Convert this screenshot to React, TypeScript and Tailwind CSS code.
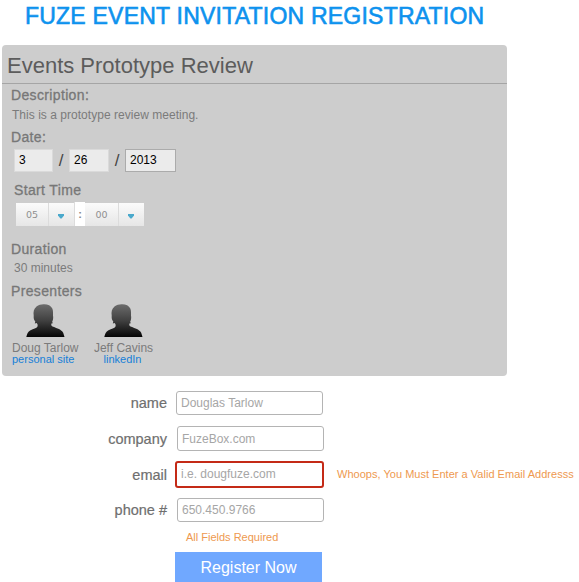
import React from "react";

function Avatar({ id }: { id: string }) {
  return (
    <svg className="block h-[33px] w-[39px]" viewBox="0 0 39 33">
      <defs>
        <linearGradient id={id} x1="0" y1="0" x2="0" y2="1">
          <stop offset="0" stopColor="#6c6c6c" />
          <stop offset="0.5" stopColor="#404040" />
          <stop offset="1" stopColor="#050505" />
        </linearGradient>
      </defs>
      <path
        fill={`url(#${id})`}
        d="M17.500 0.200C21.500 0 25 1.500 26.300 4.500C27.300 7 27 9.500 27 11.500C27.500 14 27 16 26.200 17.800L26.800 19.300L25.400 19.400C25 20.800 25.300 22 27.300 22.800C31 24.400 35.500 25.500 37.200 28.800L38.500 33H0.300C1 30.200 1.800 27.600 4.500 26.200C7.500 24.800 10.500 24.200 11.500 22.400C12 21.200 11.500 20 10.600 19L8.800 19.400L9.300 17.600C7.800 16 7.500 14 7.700 11.500C7.200 8 7.700 4.800 10.500 2.500C12.500 .9 15 .3 17.500 .2Z"
      />
    </svg>
  );
}

function SelectPart({ value, wide }: { value: string; wide?: boolean }) {
  return (
    <div className="flex h-[23px] bg-linear-to-b from-[#fbfbfb] to-[#e6e6e6]">
      <span
        className={`${wide ? "w-[33px]" : "w-[32px]"} text-center font-['DejaVu_Sans',sans-serif] text-[9.500px] leading-[24px] text-[#8f8f8f]`}
      >
        {value}
      </span>
      <span className="flex w-[26px] items-center justify-center border-l border-[#dcdcdc] pt-[3px] pr-[2px]">
        <svg className="h-[5px] w-[6px]" viewBox="0 0 6 5">
          <path d="M0 0H6V1.500L3.600 4.500H2.400L0 1.500Z" fill="#4aa9cc" />
        </svg>
      </span>
    </div>
  );
}

const label =
  "text-[14px] leading-[16px] tracking-[0.35px] text-[#777777] [-webkit-text-stroke:0.3px_#777777]";
const dateBox = "h-[23px] border bg-[#ebebeb] pl-[4px] text-[12px] leading-[21px] text-black";
const slash = "w-[16px] text-center text-[17px] text-[#444]";
const formLabel =
  "w-[167px] text-right text-[14.500px] leading-[24px] text-[#6f6f6f] [-webkit-text-stroke:0.2px_#6f6f6f]";
const field =
  "rounded-[3px] border border-[#b4b4b4] bg-white px-[4px] text-[12px] leading-[22px] text-[#a6a6a6]";

export default function App() {
  return (
    <main className="h-[582px] w-[579px] overflow-hidden bg-white font-['Liberation_Sans',Arial,sans-serif] whitespace-nowrap">
      <h1 className="h-[45px] pl-[25px] text-[23px] leading-[32px] tracking-[0.22px] text-[#0d92ee] [-webkit-text-stroke:0.6px_#0d92ee]">
        FUZE EVENT INVITATION REGISTRATION
      </h1>

      <section className="ml-[2px] h-[331px] w-[505px] rounded-[4px] bg-[#cdcdcd]">
        <h2 className="h-[39px] border-b border-[#a5a5a5] pl-[5px] text-[22px] leading-[42px] text-[#5c5c5c]">
          Events Prototype Review
        </h2>
        <div className="flex flex-col items-start pl-[9px]">
          <div className={`${label} mt-[3px]`}>Description:</div>
          <p className="mt-[4px] pl-[1px] text-[12px] leading-[16px] tracking-[0.03px] text-[#7b7b7b]">
            This is a prototype review meeting.
          </p>
          <div className={`${label} mt-[6px]`}>Date:</div>
          <div className="mt-[4px] flex pl-[3px] leading-[23px]">
            <div className={`${dateBox} w-[39px] border-[#dadada]`}>3</div>
            <span className={slash}>/</span>
            <div className={`${dateBox} w-[40px] border-[#dadada]`}>26</div>
            <span className={slash}>/</span>
            <div className={`${dateBox} w-[51px] border-[#ababab]`}>2013</div>
          </div>
          <div className={`${label} mt-[10px] pl-[3px]`}>Start Time</div>
          <div className="mt-[5px] flex items-end pl-[5px]">
            <SelectPart value="05" />
            <span className="-mt-px h-[24px] w-[11px] border-l border-[#dcdcdc] bg-white text-center text-[11px] leading-[24px] font-bold text-[#888]">
              :
            </span>
            <SelectPart value="00" wide />
          </div>
          <div className={`${label} mt-[15px]`}>Duration</div>
          <p className="mt-[3px] pl-[3px] text-[12px] leading-[16px] text-[#7b7b7b]">30 minutes</p>
          <div className={`${label} mt-[7px]`}>Presenters</div>
          <div className="mt-[5px] flex pl-[1px] text-[12px] leading-[12px] text-[#7b7b7b]">
            <div className="flex w-[67px] flex-col items-start">
              <div className="pl-[14px]">
                <Avatar id="doug" />
              </div>
              <span className="mt-[5px]">Doug Tarlow</span>
              <a className="text-[11px] leading-[11px] text-[#1680d8]">personal site</a>
            </div>
            <div className="ml-[15px] flex w-[59px] flex-col items-center">
              <Avatar id="jeff" />
              <span className="mt-[5px]">Jeff Cavins</span>
              <a className="pr-[2px] text-[11px] leading-[11px] text-[#1680d8]">linkedIn</a>
            </div>
          </div>
        </div>
      </section>

      <form>
        <div className="mt-[15px] flex h-[35px]">
          <label className={formLabel}>name</label>
          <div className={`${field} ml-[9px] h-[24px] w-[147px]`}>Douglas Tarlow</div>
        </div>
        <div className="flex h-[35px]">
          <label className={`${formLabel} pt-px`}>company</label>
          <div className={`${field} ml-[10px] h-[25px] w-[147px] pt-px`}>FuzeBox.com</div>
        </div>
        <div className="flex h-[37px]">
          <label className={`${formLabel} pt-[2px]`}>email</label>
          <div className="ml-[8px] h-[27px] w-[149px] rounded-[3px] border-2 border-[#c42a17] bg-white px-[4px] text-[12px] leading-[22px] text-[#a6a6a6]">
            i.e. dougfuze.com
          </div>
          <span className="ml-[13px] text-[11px] leading-[27px] tracking-[0.02px] text-[#ee994f]">
            Whoops, You Must Enter a Valid Email Addresss
          </span>
        </div>
        <div className="flex h-[32px]">
          <label className={formLabel}>phone #</label>
          <div className={`${field} ml-[10px] h-[24px] w-[147px]`}>650.450.9766</div>
        </div>
        <p className="h-[22px] pl-[186px] text-[11px] leading-[15px] text-[#ee994f]">All Fields Required</p>
        <button
          type="button"
          className="ml-[175px] block h-[30px] w-[147px] bg-[#70a8ff] text-[16px] leading-[31px] text-white"
        >
          Register Now
        </button>
      </form>
    </main>
  );
}
